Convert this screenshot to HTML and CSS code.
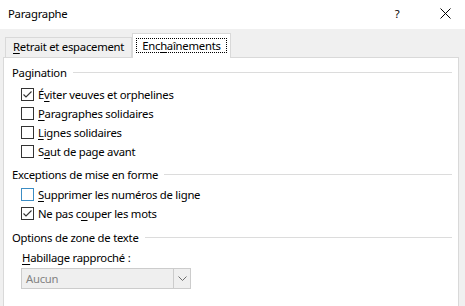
FILE: index.html
```html
<!DOCTYPE html>
<html lang="fr">
<head>
    <meta charset="UTF-8">
    <title>Paragraphe</title>
    <link rel="stylesheet" href="styles.css">
</head>
<body>
    <div class="titlebar">
        <span class="title">Paragraphe</span>
        <span class="help">?</span>
        <span class="close">
            <svg width="11" height="11" viewBox="0 0 11 11"><path d="M0.5 0.5L10.5 10.5M10.5 0.5L0.5 10.5" stroke="#000" stroke-width="1"/></svg>
        </span>
    </div>
    <div class="tabs">
        <div class="tab"><u>R</u>etrait et espacement</div>
        <div class="tab active"><span class="focus">Enc<u>h</u>aînements</span></div>
    </div>
    <div class="panel">
        <div class="group-title"><span>Pagination</span></div>
        <div class="check-row"><span class="box checked"></span><span>É<u>v</u>iter veuves et orphelines</span></div>
        <div class="check-row"><span class="box"></span><span><u>P</u>aragraphes solidaires</span></div>
        <div class="check-row"><span class="box"></span><span><u>L</u>ignes solidaires</span></div>
        <div class="check-row"><span class="box"></span><span>S<u>a</u>ut de page avant</span></div>

        <div class="group-title second"><span>Exceptions de mise en forme</span></div>
        <div class="check-row"><span class="box hover"></span><span><u>S</u>upprimer les numéros de ligne</span></div>
        <div class="check-row"><span class="box checked"></span><span>Ne pas c<u>o</u>uper les mots</span></div>

        <div class="group-title third"><span>Options de zone de texte</span></div>
        <div class="field-label"><u>H</u>abillage rapproché :</div>
        <div class="select">
            <span class="select-value">Aucun</span>
            <span class="select-arrow">
                <svg width="9" height="6" viewBox="0 0 9 6"><path d="M0.5 0.5L4.5 4.5L8.5 0.5" fill="none" stroke="#6d6d6d" stroke-width="1"/></svg>
            </span>
        </div>
    </div>
</body>
</html>
```

FILE: styles.css
```css
* {
    margin: 0;
    padding: 0;
    box-sizing: border-box;
}
body {
    font-family: 'Noto Sans', 'Open Sans', sans-serif;
    font-size: 11.3px;
    letter-spacing: -0.25px;
    color: #000;
    background: #f0f0f0;
    overflow: hidden;
    height: 306px;
}
u {
    text-decoration: underline;
    text-underline-offset: 2px;
}
.titlebar {
    height: 29px;
    background: #fff;
    display: flex;
    align-items: center;
    padding-left: 8px;
}
.title {
    flex: 1;
    padding-bottom: 3px;
}
.help {
    width: 30px;
    margin-right: 20px;
    text-align: center;
    padding-bottom: 3px;
}
.close {
    width: 27px;
    margin-right: 6px;
    display: flex;
    justify-content: center;
    padding-bottom: 2px;
}
/* tabs */
.tabs {
    display: flex;
    align-items: flex-end;
    padding: 5px 0 0 5px;
    height: 28px;
}
.tab {
    height: 20px;
    padding: 0 7px;
    border: 1px solid #d9d9d9;
    border-bottom: none;
    line-height: 18px;
    background: #f0f0f0;
}
.tab.active {
    height: 25px;
    background: #fff;
    margin-bottom: -1px;
    margin-left: 0;
    padding: 4px 3px 0;
    position: relative;
    z-index: 1;
}
.focus {
    display: block;
    border: 1px dotted #000;
    padding: 0 5px;
    line-height: 13px;
    height: 15px;
}
/* panel */
.panel {
    background: #fff;
    border: 1px solid #d9d9d9;
    margin: 0 6px 0 3px;
    height: 260px;
    padding: 5px 6px 0 8px;
}
.group-title {
    display: flex;
    align-items: center;
    height: 18px;
    gap: 6px;
    margin-bottom: 4px;
}
.group-title::after {
    content: "";
    flex: 1;
    height: 1px;
    background: #dcdcdc;
}
.group-title.second {
    margin-top: 4px;
    margin-bottom: 2px;
}
.group-title.third {
    margin-top: 5px;
    margin-bottom: 2px;
}
.check-row {
    display: flex;
    align-items: center;
    height: 19px;
    padding-left: 9px;
    gap: 4px;
}
.box {
    width: 13px;
    height: 13px;
    border: 1px solid #333;
    background: #fff;
    flex: none;
}
.box.hover {
    border-color: #3c8dc4;
}
.box.checked {
    background: #fff url("data:image/svg+xml;utf8,<svg xmlns='http://www.w3.org/2000/svg' width='11' height='11'><path d='M1.5 5.5L4 8L9.5 2.5' fill='none' stroke='%23333' stroke-width='1.1'/></svg>") no-repeat center;
}
.field-label {
    padding-left: 10px;
    height: 20px;
    line-height: 20px;
}
.select {
    margin-left: 9px;
    width: 170px;
    height: 21px;
    border: 1px solid #cccccc;
    background: #efefef;
    display: flex;
    align-items: center;
}
.select-value {
    flex: 1;
    padding-left: 4px;
    color: #838383;
}
.select-arrow {
    width: 17px;
    height: 100%;
    border-left: 1px solid #cccccc;
    display: flex;
    align-items: center;
    justify-content: center;
}
```
